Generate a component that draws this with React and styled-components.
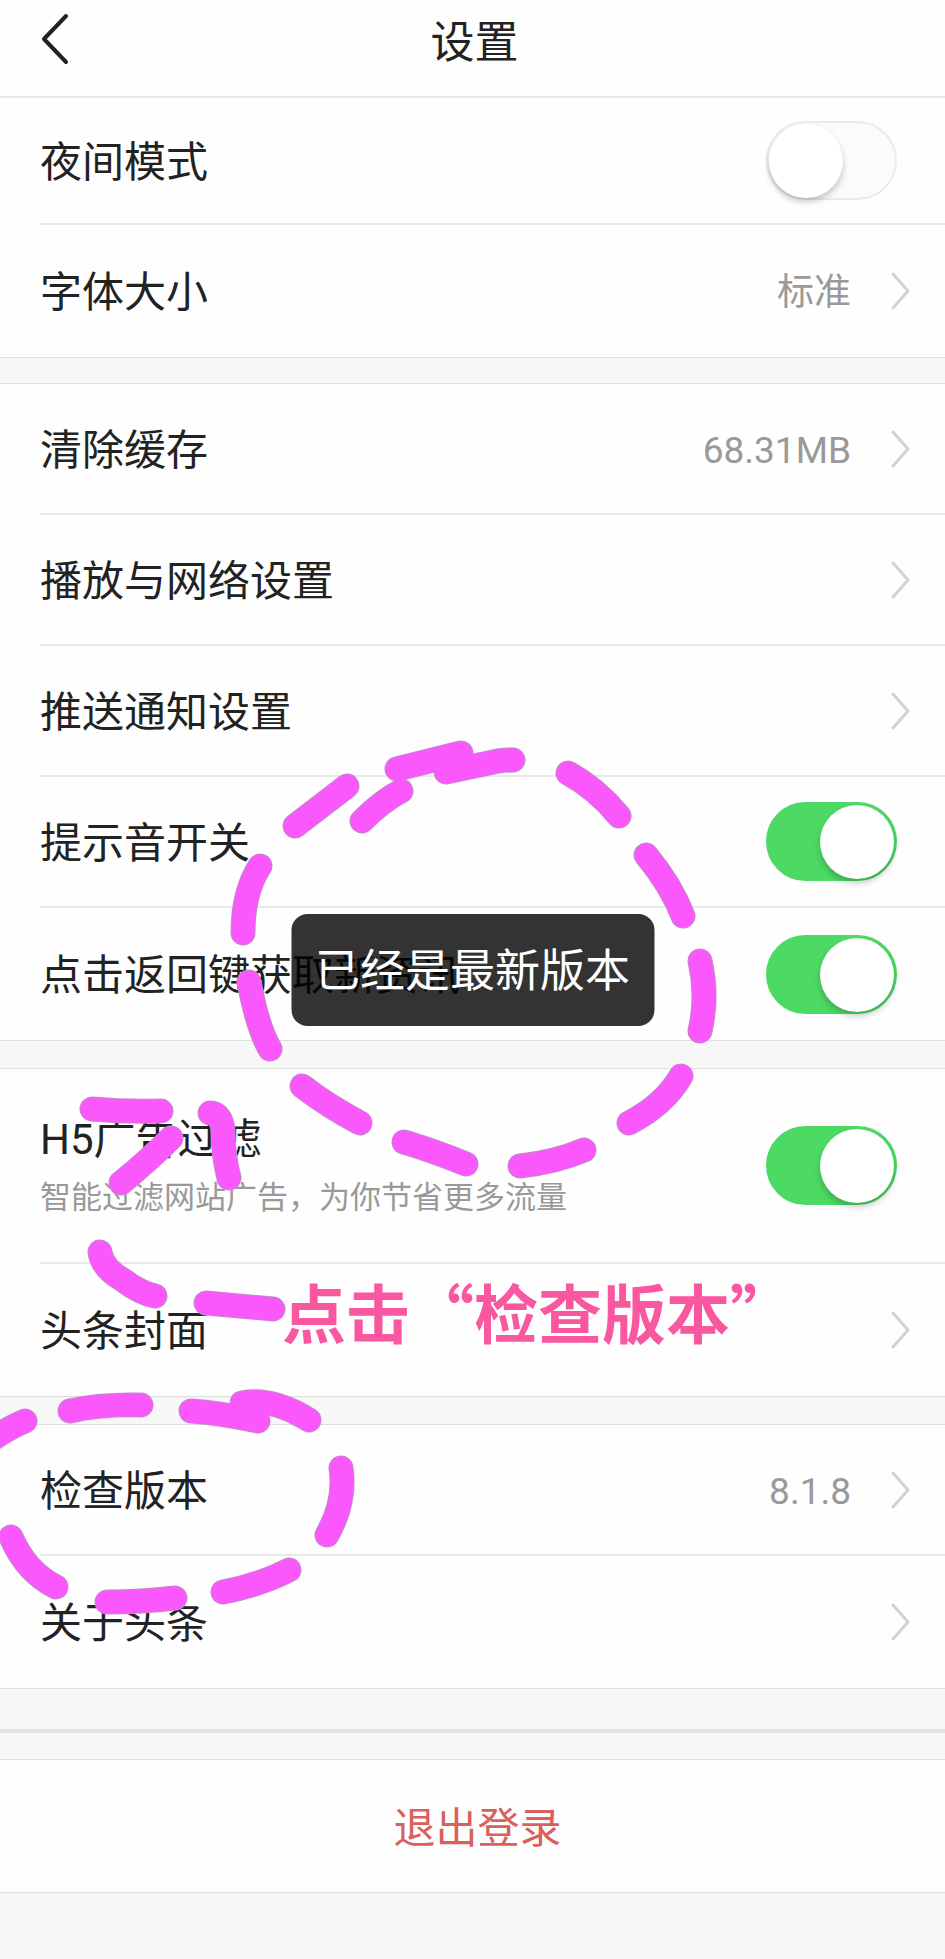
import React from 'react';
import styled, { createGlobalStyle } from 'styled-components';

const GlobalStyle = createGlobalStyle`
  *, *::before { box-sizing: border-box; }
  html { background: #f7f7f7; }
  body {
    margin: 0;
    font-family: Roboto, "Noto Sans CJK SC", sans-serif;
    color: #222;
    overflow-x: hidden;
  }
  button, input { font-family: inherit; color: inherit; margin: 0; }
`;

const Page = styled.div`
  position: relative;
  display: flex;
  flex-direction: column;
  min-height: 100vh;
  background: #f7f7f7;
  overflow: hidden;
`;

const Header = styled.header`
  display: grid;
  grid-template-columns: 112px 1fr 112px;
  align-items: center;
  height: 98px;
  padding-bottom: 14px;
  background: #fefefe;
  border-bottom: 2px solid #e6e6e6;
`;

const BackButton = styled.button`
  display: flex;
  padding: 0 0 4px 40px;
  border: 0;
  background: none;
`;

const Title = styled.h1`
  margin: 0;
  padding: 4px 0 0 4px;
  font-size: 44px;
  line-height: 60px;
  font-weight: 400;
  text-align: center;
`;

const Section = styled.section`
  background: #fefefe;
  border-top: ${(p) => (p.$first ? 0 : 1)}px solid #dedede;
  border-bottom: 1px solid #dedede;
  margin-bottom: ${(p) => p.$gap ?? 27}px;
`;

const List = styled.ul`
  margin: 0;
  padding: 0 0 0 40px;
  list-style: none;
`;

const Item = styled.li`
  display: flex;
  height: ${(p) => p.$height ?? 131}px;
  border-bottom: 2px solid #e9e9e9;
  &:last-child {
    height: 132px;
    border-bottom: 0;
  }
`;

const LinkRow = styled.button`
  flex: 1;
  display: flex;
  align-items: center;
  padding: 0 34px 0 0;
  border: 0;
  background: none;
  text-align: left;
`;

const SwitchRow = styled.label`
  flex: 1;
  display: flex;
  align-items: center;
  justify-content: space-between;
  padding-right: 48px;
`;

const Label = styled.span`
  padding-top: 4px;
  font-size: 42px;
  line-height: 60px;
  white-space: nowrap;
`;

const Texts = styled.span`
  display: flex;
  flex-direction: column;
`;

const Note = styled.span`
  font-size: 31px;
  line-height: 56px;
  color: #999;
  white-space: nowrap;
`;

const Value = styled.span`
  margin-left: auto;
  padding-top: 4px;
  font-size: 37px;
  line-height: 60px;
  color: #999;
`;

const Arrow = styled.svg`
  flex: none;
  margin-left: ${(p) => (p.$push ? 'auto' : '40px')};
`;

const Switch = styled.input`
  appearance: none;
  flex: none;
  width: 131px;
  height: 79px;
  padding: 1px;
  border: 2px solid #ebebeb;
  border-radius: 40px;
  background: #fbfbfb;
  &::before {
    content: "";
    display: block;
    width: 74px;
    height: 74px;
    border-radius: 50%;
    background: #fff;
    box-shadow: 0 4px 6px rgba(0, 0, 0, 0.22);
  }
  &:checked {
    border-color: #4cd964;
    background: #4cd964;
    padding-left: 52px;
  }
`;

const Strip = styled.hr`
  width: 100%;
  height: 4px;
  margin: 13px 0 26px;
  border: 0;
  background: #e4e4e4;
`;

const LogoutButton = styled.button`
  display: block;
  width: 100%;
  height: 132px;
  padding: 6px 0 0 10px;
  border: 0;
  background: none;
  font-size: 42px;
  line-height: 60px;
  && { color: #d9605c; }
`;

const Toast = styled.div`
  position: absolute;
  top: 914px;
  left: 50%;
  transform: translateX(-50%);
  padding: 30px 24px 26px;
  border-radius: 16px;
  background: rgba(0, 0, 0, 0.8);
  color: #fff;
  font-size: 45px;
  line-height: 56px;
  white-space: nowrap;
`;

const Callout = styled.p`
  position: absolute;
  top: 1266px;
  left: 282px;
  margin: 0;
  font-family: "Noto Sans CJK SC", sans-serif;
  font-size: 64px;
  line-height: 88px;
  font-weight: 700;
  color: #f9579f;
  white-space: nowrap;
`;

const Marker = styled.svg`
  position: absolute;
  top: 0;
  left: 0;
  pointer-events: none;
  fill: none;
  stroke-linecap: round;
  stroke-linejoin: round;
`;

const strokes = [
  // ring round the toast
  'M295 826L347 786',
  'M362 821Q382 801 401 791',
  'M397 769L461 753',
  'M446 772L498 761Q506 760 513 760',
  'M568 773Q597 789 619 816',
  'M646 855Q671 885 683 916',
  'M700 961Q708 996 700 1031',
  'M681 1076Q664 1105 629 1123',
  'M584 1150Q556 1162 520 1166',
  'M466 1164Q434 1151 404 1142',
  'M360 1123Q328 1106 302 1086',
  'M270 1049Q258 1029 249 982',
  'M243 933Q243 892 260 866',
  // arrow
  'M92 1109Q126 1112 161 1111',
  'M171 1138Q149 1160 121 1183',
  'M210 1113Q221 1113 223 1130Q223 1155 229 1178',
  'M100 1252Q102 1268 123 1280Q140 1293 155 1296',
  'M206 1303L273 1309',
  // ring round the version row
  'M70 1411Q100 1404 141 1405',
  'M191 1411Q220 1413 258 1421',
  'M242 1403Q272 1397 309 1420',
  'M341 1468Q346 1502 327 1535',
  'M289 1570Q260 1585 223 1592',
  'M175 1598Q142 1602 107 1602',
  'M11 1537Q26 1572 56 1587',
  'M25 1421Q8 1428 -12 1442',
];

function Chevron({ push }) {
  return (
    <Arrow $push={push} width="20" height="38" viewBox="0 0 20 38" fill="none" aria-hidden="true">
      <path d="M2 2L17 19L2 36" stroke="#d2d2d2" strokeWidth="3" strokeLinecap="round" strokeLinejoin="round" />
    </Arrow>
  );
}

function LinkItem({ label, value }) {
  return (
    <Item>
      <LinkRow type="button">
        <Label>{label}</Label>
        {value && <Value>{value}</Value>}
        <Chevron push={!value} />
      </LinkRow>
    </Item>
  );
}

function SwitchItem({ label, note, on, height }) {
  return (
    <Item $height={height}>
      <SwitchRow>
        <Texts>
          <Label>{label}</Label>
          {note && <Note>{note}</Note>}
        </Texts>
        <Switch type="checkbox" role="switch" defaultChecked={on} />
      </SwitchRow>
    </Item>
  );
}

export default function App() {
  return (
    <>
      <GlobalStyle />
      <Page>
        <Header>
          <BackButton type="button" aria-label="返回">
            <svg width="32" height="52" viewBox="0 0 32 52" fill="none">
              <path d="M26 3L4 26L26 49" stroke="#222" strokeWidth="4" strokeLinecap="round" strokeLinejoin="round" />
            </svg>
          </BackButton>
          <Title>设置</Title>
        </Header>

        <Section $first $gap={25}>
          <List>
            <SwitchItem label="夜间模式" height={127} />
            <LinkItem label="字体大小" value="标准" />
          </List>
        </Section>

        <Section>
          <List>
            <LinkItem label="清除缓存" value="68.31MB" />
            <LinkItem label="播放与网络设置" />
            <LinkItem label="推送通知设置" />
            <SwitchItem label="提示音开关" on />
            <SwitchItem label="点击返回键获取新资讯" on />
          </List>
        </Section>

        <Section>
          <List>
            <SwitchItem label="H5广告过滤" note="智能过滤网站广告，为你节省更多流量" on height={195} />
            <LinkItem label="头条封面" />
          </List>
        </Section>

        <Section>
          <List>
            <LinkItem label="检查版本" value="8.1.8" />
            <LinkItem label="关于头条" />
          </List>
        </Section>

        <Strip />

        <Section>
          <LogoutButton type="button">退出登录</LogoutButton>
        </Section>

        <Toast role="status">已经是最新版本</Toast>

        <Marker width="945" height="1959" viewBox="0 0 945 1959" aria-hidden="true">
          <path d={strokes.join('')} stroke="#c48acb" strokeWidth="25" />
          <path d={strokes.join('')} stroke="#fa57fc" strokeWidth="23" />
        </Marker>
        <Callout>点击“检查版本”</Callout>
      </Page>
    </>
  );
}
